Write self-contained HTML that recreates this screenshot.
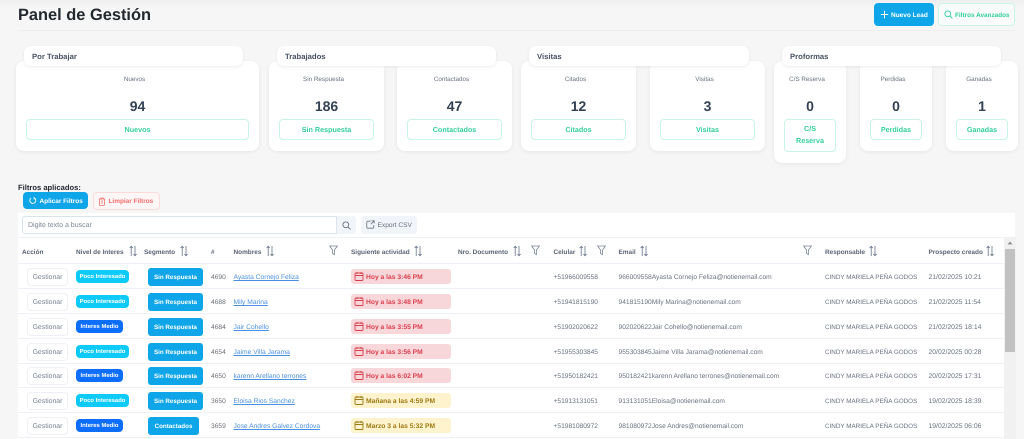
<!DOCTYPE html>
<html lang="es"><head><meta charset="utf-8"><title>Panel de Gestión</title>
<style>
*{box-sizing:border-box;margin:0;padding:0}
html,body{width:1024px;height:439px;overflow:hidden;background:#f6f6f6}
body{font-family:"Liberation Sans",sans-serif;position:relative;text-rendering:geometricPrecision}
#w{position:absolute;left:0;top:0;width:1024px;height:439px;overflow:hidden;filter:blur(.3px)}
#w>*,.r>*{position:absolute}
.nw{white-space:nowrap}
.grad{left:0;top:0;width:1024px;height:30px;background:linear-gradient(#efefef 0,#f6f6f6 8px,#f6f6f6 100%)}
h1{left:18px;top:4px;font-size:16.4px;line-height:22px;font-weight:700;color:#24292f;white-space:nowrap}
.div{left:18px;top:30px;width:997px;height:1px;background:#eeeeee}
.card{background:#fff;border-radius:8px;box-shadow:0 1px 4px rgba(0,0,0,.07);top:61px;height:90px;font-size:6.3px;color:#6b7280;text-align:center}
.card>*{position:absolute;left:0;right:0}
.card .l{top:14px;line-height:10px;right:6px}
.card .n{top:36px;font-size:14px;font-weight:700;line-height:18px;color:#334155}
.card .b{left:10px;right:10px;top:58px;height:21px;border:1px solid #c9f5e5;border-radius:4px;color:#34cf9c;font-weight:700;font-size:7.2px;line-height:19px;background:#fff}
.hd{top:46px;height:20px;background:#fff;border-radius:7px;box-shadow:0 1px 3px rgba(0,0,0,.08);font-size:7.7px;font-weight:700;color:#475064;line-height:21px;padding-left:8px}
.btn{border-radius:4px;font-weight:700;font-size:6.45px;white-space:nowrap}
.btn svg{position:absolute}
.panel{left:18px;top:213px;width:997px;height:226px;background:#fff}
.th{top:247px;font-size:6.45px;line-height:11px;font-weight:700;color:#5b6474;white-space:nowrap}
.so{top:245px;width:8px;height:12px}
.fi{top:245px;width:9px;height:11px}
.ln{height:1px;background:#edf1f7}
.r{left:0;width:1004px;height:25px;font-size:6.65px;color:#6b7280}
.r::after{content:"";position:absolute;left:18px;right:0;top:24px;height:1px;background:#edf1f7}
.r>*{white-space:nowrap}
.g{left:27px;top:4px;width:41px;height:18px;border:1px solid #eef0f4;border-radius:4px;text-align:center;line-height:18px;font-size:6.9px;color:#7b8494;background:#fff}
.p{left:76px;top:6px;height:13px;border-radius:4px;color:#fff;font-weight:700;font-size:5.9px;line-height:15px;text-align:center}
.p1{width:53px;background:#0dcaf8}
.p2{width:47px;background:#0d6efd}
.s{left:148px;top:4px;height:18px;border-radius:3px;background:#0ea5e9;color:#fff;font-weight:700;font-size:6.25px;line-height:20px;text-align:center}
.s1{width:55px}.s2{width:51px}
.id{left:211px;top:9px;line-height:10px;color:#6b6f76}
.nm{left:233.500px;top:9px;line-height:10px;color:#4a90e2;text-decoration:underline;font-size:6.7px}
.a{left:351px;top:5px;width:100px;height:15px;border-radius:3px;font-weight:700;font-size:6.72px;line-height:17px;padding-left:15px}
.a svg{position:absolute;left:3px;top:2px;width:10px;height:10px}
.red{background:#f8d7da;color:#d9414f}
.yel{background:#fff3cd;color:#9c7a14}
.ce{left:553.500px;top:9px;line-height:10px}
.em{left:618.500px;top:9px;line-height:10px}
.re{left:825px;top:9px;line-height:10px;font-size:6.3px}
.da{left:928.500px;top:9px;line-height:10px;font-size:6.8px}
</style></head><body>
<svg width="0" height="0" style="position:absolute"><defs>
<symbol id="so" viewBox="0 0 8 12"><path d="M2.200 11V1.300M.6 3 2.200 1.200 3.800 3M6 1v9.700M4.400 9 6 10.800 7.600 9" fill="none" stroke="#69758a" stroke-width=".8"/></symbol>
<symbol id="fi" viewBox="0 0 9 11"><path d="M.6 1h7.800L5.400 5v4.600L3.600 8.500V5z" fill="none" stroke="#7b8494" stroke-width=".8"/></symbol>
<symbol id="calr" viewBox="0 0 10 10"><path d="M2 2h6a1 1 0 0 1 1 1v5.500a1 1 0 0 1-1 1H2a1 1 0 0 1-1-1V3a1 1 0 0 1 1-1zM1 4.500h8M3 1v2M7 1v2" fill="none" stroke="#d9414f" stroke-width=".9"/></symbol>
<symbol id="caly" viewBox="0 0 10 10"><path d="M2 2h6a1 1 0 0 1 1 1v5.500a1 1 0 0 1-1 1H2a1 1 0 0 1-1-1V3a1 1 0 0 1 1-1zM1 4.500h8M3 1v2M7 1v2" fill="none" stroke="#9c7a14" stroke-width=".9"/></symbol>
</defs></svg>
<div id="w">
<div class="grad"></div>
<h1>Panel de Gestión</h1>
<div class="div"></div>

<div class="btn" style="left:874px;top:3px;width:60px;height:23px;background:#0ea5e9;color:#fff;line-height:25px;padding-left:17px;font-size:6.5px"><svg style="left:6px;top:7px" width="9" height="9" viewBox="0 0 9 9"><path d="M4.500 .8v7.400M.8 4.500h7.400" stroke="#fff" stroke-width="1"/></svg>Nuevo Lead</div>
<div class="btn" style="left:938px;top:3px;width:77px;height:23px;background:#f8fbfa;border:1px solid #c9f5e5;color:#34cf9c;line-height:23px;padding-left:16px;font-size:6.4px"><svg style="left:5px;top:6px" width="9" height="9" viewBox="0 0 9 9"><circle cx="3.800" cy="3.800" r="2.900" fill="none" stroke="#34cf9c" stroke-width=".9"/><path d="M6 6l2.400 2.400" stroke="#34cf9c" stroke-width=".9"/></svg>Filtros Avanzados</div>

<div class="card" style="left:16px;width:243px"><div class="l">Nuevos</div><div class="n">94</div><div class="b">Nuevos</div></div>
<div class="card" style="left:269px;width:115px"><div class="l">Sin Respuesta</div><div class="n">186</div><div class="b">Sin Respuesta</div></div>
<div class="card" style="left:397px;width:115px"><div class="l">Contactados</div><div class="n">47</div><div class="b">Contactados</div></div>
<div class="card" style="left:521px;width:115px"><div class="l">Citados</div><div class="n">12</div><div class="b">Citados</div></div>
<div class="card" style="left:650px;width:115px"><div class="l">Visitas</div><div class="n">3</div><div class="b">Visitas</div></div>
<div class="card" style="left:774px;width:72px;height:102px"><div class="l">C/S Reserva</div><div class="n">0</div><div class="b" style="height:33px;line-height:12px;padding-top:3px">C/S<br>Reserva</div></div>
<div class="card" style="left:860px;width:72px"><div class="l">Perdidas</div><div class="n">0</div><div class="b">Perdidas</div></div>
<div class="card" style="left:946px;width:72px"><div class="l">Ganadas</div><div class="n">1</div><div class="b">Ganadas</div></div>

<div class="hd" style="left:24px;width:219px">Por Trabajar</div>
<div class="hd" style="left:277px;width:219px">Trabajados</div>
<div class="hd" style="left:529px;width:220px">Visitas</div>
<div class="hd" style="left:782px;width:219px">Proformas</div>

<div class="nw" style="left:18px;top:183px;font-size:7.6px;line-height:10px;font-weight:700;color:#24292f">Filtros aplicados:</div>
<div class="btn" style="left:22.500px;top:192px;width:65.500px;height:17px;background:#0ea5e9;color:#fff;line-height:19px;padding-left:17px"><svg style="left:6px;top:4px" width="8" height="9" viewBox="0 0 8 9"><path d="M5.800 2.200A3 3 0 1 1 2 2" fill="none" stroke="#fff" stroke-width=".9"/><path d="M4.600 1.200l1.300 1.200-1.300.9" fill="none" stroke="#fff" stroke-width=".8"/></svg>Aplicar Filtros</div>
<div class="btn" style="left:92.500px;top:192px;width:67px;height:18px;background:#fdf6f6;border:1px solid #fbdada;color:#f26d6d;line-height:18px;padding-left:15px"><svg style="left:4.500px;top:3.500px" width="8" height="9" viewBox="0 0 8 9"><path d="M.8 2h6.400M2.800 2V1h2.400v1M1.500 2v5.500a1 1 0 0 0 1 1h3a1 1 0 0 0 1-1V2M3 4h2M3 6h2" fill="none" stroke="#f26d6d" stroke-width=".8"/></svg>Limpiar Filtros</div>

<div class="panel"></div>
<div style="left:22px;top:216px;width:315px;height:18px;background:#fff;border:1px solid #dbe3ef;border-radius:3px 0 0 3px;font-size:7px;line-height:18px;color:#7b8494;padding-left:5px">Digite texto a buscar</div>
<div style="left:337px;top:216px;width:19px;height:18px;background:#f1f5f9;border-radius:0 3px 3px 0"><svg style="position:absolute;left:5px;top:4.500px" width="9" height="9" viewBox="0 0 9 9"><circle cx="3.800" cy="3.800" r="2.900" fill="none" stroke="#6b7280" stroke-width=".9"/><path d="M6 6l2.400 2.400" stroke="#6b7280" stroke-width=".9"/></svg></div>
<div style="left:361px;top:216px;width:56px;height:18px;background:#f1f5f9;border-radius:3px;font-size:6.6px;line-height:20px;color:#6b7280;padding-left:16.500px;white-space:nowrap"><svg style="position:absolute;left:5px;top:4px" width="9" height="9" viewBox="0 0 9 9"><path d="M4.500 1.200H1.800a1 1 0 0 0-1 1v5a1 1 0 0 0 1 1h5a1 1 0 0 0 1-1V5M5.500 .8h2.700v2.700M8 1 4.800 4.200" fill="none" stroke="#6b7280" stroke-width=".8"/></svg>Export CSV</div>

<div class="ln" style="left:18px;top:237px;width:986px"></div>
<div class="ln" style="left:18px;top:263px;width:986px"></div>

<div class="th" style="left:22px">Acción</div>
<div class="th" style="left:76px">Nivel de Interes</div><svg class="so" style="left:128.500px"><use href="#so"/></svg>
<div class="th" style="left:144px">Segmento</div><svg class="so" style="left:180px"><use href="#so"/></svg>
<div class="th" style="left:211px">#</div>
<div class="th" style="left:233.500px">Nombres</div><svg class="so" style="left:266px"><use href="#so"/></svg><svg class="fi" style="left:329px"><use href="#fi"/></svg>
<div class="th" style="left:351px">Siguiente actividad</div><svg class="so" style="left:414px"><use href="#so"/></svg>
<div class="th" style="left:458px">Nro. Documento</div><svg class="so" style="left:513px"><use href="#so"/></svg><svg class="fi" style="left:531px"><use href="#fi"/></svg>
<div class="th" style="left:553.500px">Celular</div><svg class="so" style="left:579px"><use href="#so"/></svg><svg class="fi" style="left:596.500px"><use href="#fi"/></svg>
<div class="th" style="left:618.500px">Email</div><svg class="so" style="left:639.500px"><use href="#so"/></svg><svg class="fi" style="left:803px"><use href="#fi"/></svg>
<div class="th" style="left:825px">Responsable</div><svg class="so" style="left:868.500px"><use href="#so"/></svg>
<div class="th" style="left:928.500px">Prospecto creado</div><svg class="so" style="left:986px"><use href="#so"/></svg>

<div class="r" style="top:264px"><div class="g">Gestionar</div><div class="p p1">Poco Interesado</div><div class="s s1">Sin Respuesta</div><div class="id">4690</div><div class="nm">Ayasta Cornejo Feliza</div><div class="a red"><svg><use href="#calr"/></svg>Hoy a las 3:46 PM</div><div class="ce">+51966009558</div><div class="em">966009558Ayasta Cornejo Feliza@notienemail.com</div><div class="re">CINDY MARIELA PEÑA GODOS</div><div class="da">21/02/2025 10:21</div></div>
<div class="r" style="top:289px"><div class="g">Gestionar</div><div class="p p1">Poco Interesado</div><div class="s s1">Sin Respuesta</div><div class="id">4688</div><div class="nm">Mily Marina</div><div class="a red"><svg><use href="#calr"/></svg>Hoy a las 3:48 PM</div><div class="ce">+51941815190</div><div class="em">941815190Mily Marina@notienemail.com</div><div class="re">CINDY MARIELA PEÑA GODOS</div><div class="da">21/02/2025 11:54</div></div>
<div class="r" style="top:314px"><div class="g">Gestionar</div><div class="p p2">Interes Medio</div><div class="s s1">Sin Respuesta</div><div class="id">4684</div><div class="nm">Jair Cohello</div><div class="a red"><svg><use href="#calr"/></svg>Hoy a las 3:55 PM</div><div class="ce">+51902020622</div><div class="em">902020622Jair Cohello@notienemail.com</div><div class="re">CINDY MARIELA PEÑA GODOS</div><div class="da">21/02/2025 18:14</div></div>
<div class="r" style="top:339px"><div class="g">Gestionar</div><div class="p p1">Poco Interesado</div><div class="s s1">Sin Respuesta</div><div class="id">4654</div><div class="nm">Jaime Villa Jarama</div><div class="a red"><svg><use href="#calr"/></svg>Hoy a las 3:56 PM</div><div class="ce">+51955303845</div><div class="em">955303845Jaime Villa Jarama@notienemail.com</div><div class="re">CINDY MARIELA PEÑA GODOS</div><div class="da">20/02/2025 00:28</div></div>
<div class="r" style="top:363px"><div class="g">Gestionar</div><div class="p p2">Interes Medio</div><div class="s s1">Sin Respuesta</div><div class="id">4650</div><div class="nm">karenn Arellano terrones</div><div class="a red"><svg><use href="#calr"/></svg>Hoy a las 6:02 PM</div><div class="ce">+51950182421</div><div class="em">950182421karenn Arellano terrones@notienemail.com</div><div class="re">CINDY MARIELA PEÑA GODOS</div><div class="da">20/02/2025 17:31</div></div>
<div class="r" style="top:388px"><div class="g">Gestionar</div><div class="p p1">Poco Interesado</div><div class="s s1">Sin Respuesta</div><div class="id">3650</div><div class="nm">Eloisa Rios Sanchez</div><div class="a yel"><svg><use href="#caly"/></svg>Mañana a las 4:59 PM</div><div class="ce">+51913131051</div><div class="em">913131051Eloisa@notienemail.com</div><div class="re">CINDY MARIELA PEÑA GODOS</div><div class="da">19/02/2025 18:39</div></div>
<div class="r" style="top:413px"><div class="g">Gestionar</div><div class="p p2">Interes Medio</div><div class="s s2">Contactados</div><div class="id">3659</div><div class="nm">Jose Andres Galvez Cordova</div><div class="a yel"><svg><use href="#caly"/></svg>Marzo 3 a las 5:32 PM</div><div class="ce">+51981080972</div><div class="em">981080972Jose Andres@notienemail.com</div><div class="re">CINDY MARIELA PEÑA GODOS</div><div class="da">19/02/2025 06:06</div></div>

<div style="left:1004px;top:237px;width:11.500px;height:202px;background:#f1f1f1"></div>
<svg style="left:1007px;top:241px" width="6" height="4" viewBox="0 0 6 4"><path d="M3 .5 5.500 3.500H.5z" fill="#8e8e8e"/></svg>
<div style="left:1005px;top:249px;width:9.500px;height:103px;background:#c1c1c1"></div>
</div>
</body></html>
